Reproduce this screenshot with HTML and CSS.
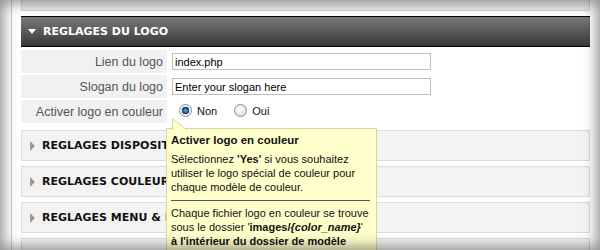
FILE: index.html
```html
<!DOCTYPE html>
<html lang="fr">
<head>
    <meta charset="UTF-8">
    <title>Reglages du logo</title>
    <link rel="stylesheet" href="styles.css">
</head>
<body>

    <div class="page">
        <div class="prev-box"></div>

        <!-- Open section -->
        <div class="section-head">
            <span class="arrow-down"></span>REGLAGES DU LOGO
        </div>
        <table class="params">
            <tr>
                <td class="label">Lien du logo</td>
                <td class="value"><input class="text-field" value="index.php"></td>
            </tr>
            <tr>
                <td class="label">Slogan du logo</td>
                <td class="value"><input class="text-field" value="Enter your slogan here"></td>
            </tr>
            <tr>
                <td class="label">Activer logo en couleur</td>
                <td class="value">
                    <label class="radio-label"><input type="radio" name="logo_color" class="radio" checked>Non</label>
                    <label class="radio-label"><input type="radio" name="logo_color" class="radio">Oui</label>
                </td>
            </tr>
        </table>

        <!-- Closed sections -->
        <div class="section-closed"><span class="arrow-right"></span>REGLAGES DISPOSITION</div>
        <div class="section-closed"><span class="arrow-right"></span>REGLAGES COULEURS</div>
        <div class="section-closed"><span class="arrow-right"></span>REGLAGES MENU &amp; NAVIGATION</div>
        <div class="section-closed"></div>

        <!-- Tooltip -->
        <div class="tip">
            <svg class="tip-pointer" width="16" height="12" viewBox="0 0 16 12">
                <polygon points="0.5,0.5 0.5,12 15,12" fill="#ffffcc"/>
                <polyline points="0.5,12 0.5,0.5 15,12" fill="none" stroke="#d6d6a4" stroke-width="1"/>
            </svg>
            <div class="tip-title">Activer logo en couleur</div>
            <p class="tip-text">Sélectionnez <b>'Yes'</b> si vous souhaitez utiliser le logo spécial de couleur pour chaque modèle de couleur.</p>
            <hr class="tip-line">
            <p class="tip-text">Chaque fichier logo en couleur se trouve sous le dossier '<b>images/<i>{color_name}</i></b>' <b>à l'intérieur du dossier de modèle</b></p>
        </div>
    </div>

    <div class="vignette"></div>

</body>
</html>
```

FILE: styles.css
```css
body {
    margin: 0;
    background-color: #fff;
    font-family: "Liberation Sans", Arial, sans-serif;
    overflow: hidden;
    height: 250px;
}
.page {
    position: relative;
    margin-left: 11px;
    border-left: 1px solid #cfcfcf;
    padding: 0 10px 0 9px;
    height: 250px;
}
.prev-box {
    height: 10px;
    background-color: #ececec;
    border: 1px solid #d8d8d8;
    border-top: none;
    margin-bottom: 5px;
}
.section-head {
    display: flex;
    align-items: center;
    height: 29px;
    padding-left: 7px;
    border-top: 1px solid #000;
    border-bottom: 1px solid #000;
    background: linear-gradient(#7a7a7a, #383838);
    color: #fff;
    font-family: "DejaVu Sans", Verdana, sans-serif;
    font-weight: bold;
    font-size: 11px;
}
.arrow-down {
    width: 0;
    height: 0;
    border-left: 4px solid transparent;
    border-right: 4px solid transparent;
    border-top: 5px solid #fff;
    margin-right: 7px;
}
.params {
    border-collapse: collapse;
    margin-top: 3px;
    width: 100%;
}
.params td {
    height: 23px;
    padding: 0;
    border-bottom: 2px solid #fff;
    vertical-align: middle;
}
.label {
    width: 142px;
    padding-right: 4px !important;
    background-color: #f1f1f1;
    text-align: right;
    color: #555;
    font-size: 12.5px;
    white-space: nowrap;
}
.value {
    padding-left: 5px !important;
    font-size: 11px;
    color: #111;
}
.text-field {
    display: block;
    box-sizing: border-box;
    width: 259px;
    height: 17px;
    margin: 0;
    padding: 0 2px;
    border: 1px solid #bdbdbd;
    font-family: "Liberation Sans", Arial, sans-serif;
    font-size: 11px;
    color: #000;
}
.radio-label {
    display: inline-flex;
    align-items: center;
    margin-right: 7px;
}
.radio {
    appearance: none;
    -webkit-appearance: none;
    width: 13px;
    height: 13px;
    margin: 0 5px 0 7px;
    border-radius: 50%;
    border: 1px solid #8c8c8c;
    background: radial-gradient(circle at 40% 35%, #fff, #d4d4d4);
}
.radio:checked {
    background: radial-gradient(circle at 50% 50%, #5fb6e6 0, #1c6ea8 2px, #0a3f66 3.5px, #e8e8e8 4px, #fff 6px);
}
.section-closed {
    display: flex;
    align-items: center;
    height: 29px;
    margin-bottom: 5px;
    padding-left: 8px;
    border: 1px solid #dcdcdc;
    background-color: #f3f3f3;
    color: #111;
    font-family: "DejaVu Sans", Verdana, sans-serif;
    font-weight: bold;
    font-size: 11px;
}
.params + .section-closed {
    margin-top: 5px;
}
.arrow-right {
    width: 0;
    height: 0;
    border-top: 5px solid transparent;
    border-bottom: 5px solid transparent;
    border-left: 5px solid #999;
    margin-right: 7px;
}
.tip {
    position: absolute;
    left: 154px;
    top: 128px;
    width: 199px;
    padding: 4px 6px 4px 4px;
    background-color: #ffffcc;
    border: 1px solid #d6d6a4;
    color: #111;
    font-size: 11px;
    line-height: 14px;
}
.tip-pointer {
    position: absolute;
    left: 5px;
    top: -11px;
}
.tip-title {
    font-weight: bold;
    font-size: 11.5px;
}
.tip-text {
    margin: 5px 0 0 0;
}
.tip-line {
    border: 0;
    border-top: 1px solid #555;
    margin: 6px 0 0 0;
}
.vignette {
    position: fixed;
    left: 0;
    top: 0;
    right: 0;
    bottom: 0;
    pointer-events: none;
    box-shadow: inset 0 0 14px 3px rgba(0, 0, 0, 0.45);
}
```
